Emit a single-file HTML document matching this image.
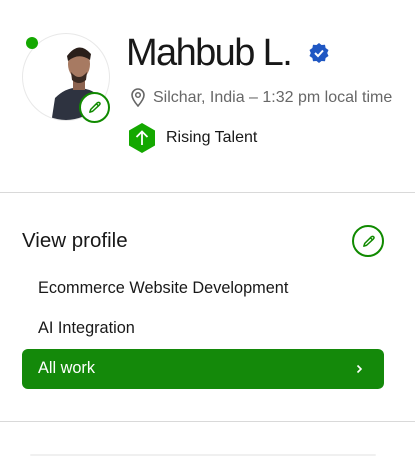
<!DOCTYPE html><html><head><style>
body{margin:0;width:415px;height:456px;background:#fff;font-family:"Liberation Sans",sans-serif;color:#181818;position:relative;overflow:hidden}
.a{position:absolute}
</style></head><body>
<div class="a" style="left:22px;top:33px;width:88px;height:88px;border-radius:50%;border:1px solid #e8e8e8;box-sizing:border-box;overflow:hidden;background:#fff">
<svg width="88" height="88" viewBox="0 0 88 88"><path d="M28 90 L32 64 Q44 52 58 54 Q74 56 84 70 L88 90Z" fill="#2e3340"/><path d="M50 44 L50 56 L62 56 L62 44Z" fill="#8c6350"/><ellipse cx="56" cy="30" rx="11" ry="15" fill="#a77a62"/><path d="M44 22 Q56 6 68 20 L67 26 Q56 18 45 27Z" fill="#2a1f1a"/><path d="M48 38 Q56 48 64 38 L63 46 Q56 52 49 46Z" fill="#3a2a22"/></svg></div>
<div class="a" style="left:26px;top:37px;width:12px;height:12px;border-radius:50%;background:#14a800"></div>
<div class="a" style="left:79px;top:92px;width:31px;height:31px;border-radius:50%;background:#fff;border:2px solid #108a00;box-sizing:border-box">
<svg class="a" style="left:6px;top:6px" width="15" height="15" viewBox="0 0 16 16"><path d="M3 13 L4 10 L11 3 Q12.5 2 13.5 3 Q14.5 4 13 5.5 L6 12 Z M10 4 L12 6" fill="none" stroke="#108a00" stroke-width="1.6" stroke-linejoin="round"/></svg></div>
<div class="a" style="left:126px;top:30px;font-size:38px;line-height:46px;letter-spacing:-1.6px">Mahbub L.</div>
<svg class="a" style="left:308px;top:42px" width="22" height="22" viewBox="0 0 22 22"><path d="M11 1 L13.5 3 L17 2.8 L17.6 6 L20.5 8 L19.2 11 L20.5 14 L17.6 16 L17 19.2 L13.5 19 L11 21 L8.5 19 L5 19.2 L4.4 16 L1.5 14 L2.8 11 L1.5 8 L4.4 6 L5 2.8 L8.5 3Z" fill="#1f57c3"/><path d="M7 11 L10 14 L15 8.5" fill="none" stroke="#fff" stroke-width="2"/></svg>
<svg class="a" style="left:130px;top:87px" width="16" height="20" viewBox="0 0 16 20"><path d="M8 19 Q2 12 2 8 A6 6 0 0 1 14 8 Q14 12 8 19Z" fill="none" stroke="#676767" stroke-width="1.6"/><circle cx="8" cy="8" r="2.3" fill="none" stroke="#676767" stroke-width="1.5"/></svg>
<div class="a" style="left:153px;top:88px;font-size:16px;line-height:20px;color:#676767">Silchar, India – 1:32 pm local time</div>
<svg class="a" style="left:127px;top:122px" width="30" height="32" viewBox="0 0 30 32"><path d="M15 1 L28 8.5 L28 23.5 L15 31 L2 23.5 L2 8.5Z" fill="#14a800"/><path d="M15 23 L15 10 M9.5 15 L15 9.5 L20.5 15" fill="none" stroke="#fff" stroke-width="1.8"/></svg>
<div class="a" style="left:166px;top:128px;font-size:16px;line-height:20px">Rising Talent</div>
<div class="a" style="left:0;top:192px;width:415px;height:1px;background:#d9d9d9"></div>
<div class="a" style="left:22px;top:229px;font-size:20.5px;line-height:24px">View profile</div>
<div class="a" style="left:352px;top:225px;width:32px;height:32px;border-radius:50%;border:2px solid #108a00;box-sizing:border-box">
<svg class="a" style="left:7px;top:7px" width="15" height="15" viewBox="0 0 16 16"><path d="M3 13 L4 10 L11 3 Q12.5 2 13.5 3 Q14.5 4 13 5.5 L6 12 Z M10 4 L12 6" fill="none" stroke="#108a00" stroke-width="1.6" stroke-linejoin="round"/></svg></div>
<div class="a" style="left:38px;top:278px;font-size:16.3px;line-height:20px">Ecommerce Website Development</div>
<div class="a" style="left:38px;top:318px;font-size:16.3px;line-height:20px">AI Integration</div>
<div class="a" style="left:22px;top:349px;width:362px;height:40px;border-radius:6px;background:#14890a"></div>
<div class="a" style="left:38px;top:358px;font-size:16.3px;line-height:20px;color:#fff">All work</div>
<svg class="a" style="left:355px;top:363px" width="8" height="12" viewBox="0 0 8 12"><path d="M2.5 2.5 L6 6 L2.5 9.5" fill="none" stroke="#fff" stroke-width="1.6"/></svg>
<div class="a" style="left:0;top:421px;width:415px;height:1px;background:#d9d9d9"></div>
<div class="a" style="left:30px;top:454px;width:346px;height:2px;background:#f0f0f0;border-radius:4px"></div>
</body></html>
